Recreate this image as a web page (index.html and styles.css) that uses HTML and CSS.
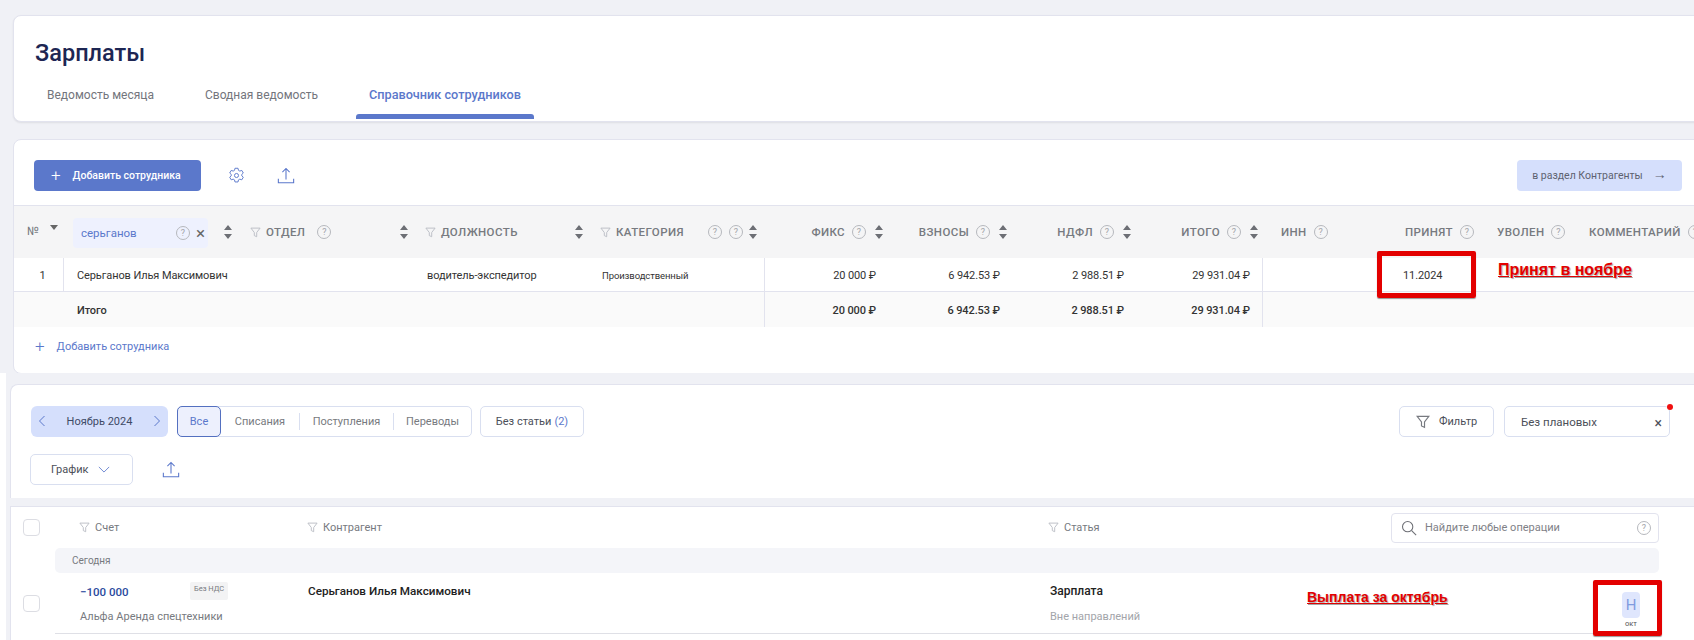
FILE: index.html
```html
<!DOCTYPE html>
<html lang="ru">
<head>
    <meta charset="UTF-8">
    <meta name="viewport" content="width=device-width, initial-scale=1.0">
    <title>Зарплаты</title>
    <link rel="stylesheet" href="styles.css">
</head>
<body>
    <svg class="sprite" width="0" height="0">
        <symbol id="i-filter" viewBox="0 0 12 12"><path d="M1 1.2h10L7.3 6v4.6L4.7 9.4V6z" fill="none" stroke="currentColor" stroke-width="1"/></symbol>
        <symbol id="i-sort" viewBox="0 0 8 16"><path d="M4 1l4 5H0zM4 15l4-5H0z" fill="currentColor"/></symbol>
        <symbol id="i-upload" viewBox="0 0 20 20"><path d="M10 14V2M6 5.6L10 1.6l4 4M1.5 13v4.5h17V13" fill="none" stroke="currentColor" stroke-width="1.2"/></symbol>
        <symbol id="i-gear" viewBox="0 0 20 20"><path d="M8.2 1.5h3.6l.5 2.4 1.6.9 2.3-.8 1.8 3.1-1.8 1.6v1.7l1.8 1.6-1.8 3.1-2.3-.8-1.6.9-.5 2.4H8.2l-.5-2.4-1.6-.9-2.3.8-1.8-3.1 1.8-1.6V8.7L2 7.1l1.8-3.1 2.3.8 1.6-.9z" fill="none" stroke="currentColor" stroke-width="1.1"/><circle cx="10" cy="10" r="2.4" fill="none" stroke="currentColor" stroke-width="1.1"/></symbol>
        <symbol id="i-search" viewBox="0 0 18 18"><circle cx="7.5" cy="7.5" r="5.8" fill="none" stroke="currentColor" stroke-width="1.2"/><path d="M12 12l5 5" stroke="currentColor" stroke-width="1.2"/></symbol>
        <symbol id="i-left" viewBox="0 0 8 12"><path d="M6.5 1L1.5 6l5 5" fill="none" stroke="currentColor"/></symbol>
        <symbol id="i-right" viewBox="0 0 8 12"><path d="M1.5 1l5 5-5 5" fill="none" stroke="currentColor"/></symbol>
    </svg>

    <div class="page">
        <div class="upper">
            <!-- Шапка -->
            <section class="card head-card">
                <h1>Зарплаты</h1>
                <div class="tabs">
                    <div class="tab">Ведомость месяца</div>
                    <div class="tab">Сводная ведомость</div>
                    <div class="tab tab-active">Справочник сотрудников</div>
                </div>
            </section>

            <!-- Справочник -->
            <section class="card staff-card">
                <div class="toolbar">
                    <button class="btn-primary"><span class="plus">+</span>Добавить сотрудника</button>
                    <svg class="icon-gear"><use href="#i-gear"/></svg>
                    <svg class="icon-upload"><use href="#i-upload"/></svg>
                    <button class="btn-light">в раздел Контрагенты<span class="arrow">→</span></button>
                </div>

                <div class="staff-row staff-head">
                    <div class="hc hc-num">№<i class="caret"></i></div>
                    <div class="hc hc-name">
                        <div class="search-chip">серьганов<span class="help"><span>?</span></span><span class="chip-x">×</span></div>
                        <svg class="sort"><use href="#i-sort"/></svg>
                    </div>
                    <div class="hc"><svg class="filter"><use href="#i-filter"/></svg>ОТДЕЛ<span class="help help-wide"><span>?</span></span><svg class="sort"><use href="#i-sort"/></svg></div>
                    <div class="hc"><svg class="filter"><use href="#i-filter"/></svg>ДОЛЖНОСТЬ<svg class="sort"><use href="#i-sort"/></svg></div>
                    <div class="hc"><svg class="filter"><use href="#i-filter"/></svg>КАТЕГОРИЯ<span class="help help-far"><span>?</span></span><span class="help"><span>?</span></span><svg class="sort"><use href="#i-sort"/></svg></div>
                    <div class="hc hc-num-col">ФИКС<span class="help"><span>?</span></span><svg class="sort"><use href="#i-sort"/></svg></div>
                    <div class="hc hc-num-col">ВЗНОСЫ<span class="help"><span>?</span></span><svg class="sort"><use href="#i-sort"/></svg></div>
                    <div class="hc hc-num-col">НДФЛ<span class="help"><span>?</span></span><svg class="sort"><use href="#i-sort"/></svg></div>
                    <div class="hc hc-num-col">ИТОГО<span class="help"><span>?</span></span><svg class="sort"><use href="#i-sort"/></svg></div>
                    <div class="hc hc-inn">ИНН<span class="help"><span>?</span></span></div>
                    <div class="hc hc-hired">ПРИНЯТ<span class="help"><span>?</span></span></div>
                    <div class="hc hc-plain">УВОЛЕН<span class="help"><span>?</span></span></div>
                    <div class="hc hc-plain">КОММЕНТАРИЙ<span class="help"><span>?</span></span></div>
                </div>

                <div class="staff-row staff-line">
                    <div class="c c-num">1</div>
                    <div class="c c-name">Серьганов Илья Максимович</div>
                    <div class="c"></div>
                    <div class="c c-pos">водитель-экспедитор</div>
                    <div class="c c-cat">Производственный</div>
                    <div class="c c-sum c-first">20 000 ₽</div>
                    <div class="c c-sum">6 942.53 ₽</div>
                    <div class="c c-sum">2 988.51 ₽</div>
                    <div class="c c-sum c-last">29 931.04 ₽</div>
                    <div class="c"></div>
                    <div class="c c-date">11.2024</div>
                    <div class="c"></div>
                    <div class="c"></div>
                </div>

                <div class="staff-row staff-total">
                    <div class="c"></div>
                    <div class="c c-name">Итого</div>
                    <div class="c"></div>
                    <div class="c"></div>
                    <div class="c"></div>
                    <div class="c c-sum c-first">20 000 ₽</div>
                    <div class="c c-sum">6 942.53 ₽</div>
                    <div class="c c-sum">2 988.51 ₽</div>
                    <div class="c c-sum c-last">29 931.04 ₽</div>
                    <div class="c"></div>
                    <div class="c"></div>
                    <div class="c"></div>
                    <div class="c"></div>
                </div>

                <div class="add-link"><span class="plus">+</span>Добавить сотрудника</div>
            </section>
        </div>

        <!-- Операции -->
        <div class="lower">
            <div class="lower-inner">
                <section class="ops-top">
                    <div class="ops-bar">
                        <div class="month"><svg class="chev"><use href="#i-left"/></svg><span>Ноябрь 2024</span><svg class="chev"><use href="#i-right"/></svg></div>
                        <div class="segments">
                            <div class="seg seg-active">Все</div>
                            <div class="seg seg-spis">Списания</div>
                            <div class="seg seg-post">Поступления</div>
                            <div class="seg seg-perev">Переводы</div>
                        </div>
                        <div class="outline no-cat">Без статьи <span class="count">(2)</span></div>
                        <div class="outline filter-btn"><svg class="filter-big"><use href="#i-filter"/></svg>Фильтр</div>
                        <div class="outline plan-btn">Без плановых<span class="plan-x">×</span><i class="dot"></i></div>
                    </div>
                    <div class="ops-bar ops-bar2">
                        <div class="outline chart-btn">График
                            <svg class="down" viewBox="0 0 14 8"><path d="M1 1l6 6 6-6" fill="none" stroke="currentColor"/></svg>
                        </div>
                        <svg class="icon-upload"><use href="#i-upload"/></svg>
                    </div>
                </section>

                <section class="ops-list">
                    <div class="ops-head">
                        <div class="check-col"><i class="check"></i></div>
                        <div class="oh oh-acc"><svg class="filter"><use href="#i-filter"/></svg>Счет</div>
                        <div class="oh"><svg class="filter"><use href="#i-filter"/></svg>Контрагент</div>
                        <div class="oh"><svg class="filter"><use href="#i-filter"/></svg>Статья</div>
                        <div class="op-search">
                            <svg class="icon-search"><use href="#i-search"/></svg>
                            <span>Найдите любые операции</span>
                            <span class="help"><span>?</span></span>
                        </div>
                    </div>
                    <div class="day">Сегодня</div>
                    <div class="op-row">
                        <div class="check-col"><i class="check"></i></div>
                        <div class="op-body">
                            <div class="op-acc">
                                <div class="op-top"><span class="amount">−100 000</span><span class="badge">Без НДС</span></div>
                                <div class="op-sub">Альфа Аренда спецтехники</div>
                            </div>
                            <div class="op-name">Серьганов Илья Максимович</div>
                            <div class="op-art">
                                <div class="op-art-title">Зарплата</div>
                                <div class="op-muted">Вне направлений</div>
                            </div>
                            <div class="op-tag">
                                <div class="tag-n">Н</div>
                                <div class="tag-label">окт</div>
                            </div>
                        </div>
                    </div>
                </section>
            </div>
        </div>

        <!-- Пометки поверх скриншота -->
        <div class="mark mark-hired"></div>
        <div class="mark mark-oct"></div>
        <div class="note note-hired">Принят в ноябре</div>
        <div class="note note-oct">Выплата за октябрь</div>
    </div>
</body>
</html>
```

FILE: styles.css
```css
* {
    margin: 0;
    padding: 0;
    box-sizing: border-box;
}

body {
    font-family: 'Roboto', 'Noto Sans', sans-serif;
    background-color: #f0f1f6;
    color: #333;
    font-size: 12px;
    overflow: hidden;
}

.sprite {
    position: absolute;
}

.page {
    position: relative;
    width: 1694px;
    height: 640px;
    overflow: hidden;
}

.upper {
    padding: 15px 0 0 13px;
    height: 373px;
}

.card {
    background: #fff;
    border: 1px solid #e2e3ee;
    border-radius: 8px;
    width: 1700px;
    overflow: hidden;
}

/* Шапка */
.head-card {
    height: 107px;
    box-shadow: 0 1px 2px rgba(0, 0, 0, 0.08);
    padding: 23px 0 0 21px;
}

.head-card h1 {
    font-size: 23.5px;
    line-height: 28px;
    font-weight: 500;
    color: #1d2653;
}

.tabs {
    display: flex;
    gap: 25px;
    margin: 20px 0 0 -1px;
}

.tab {
    padding: 0 13px;
    line-height: 16px;
    color: #73757c;
    font-size: 12px;
}

.tab-active {
    color: #5b78cb;
    font-weight: 500;
    font-size: 12.7px;
}

.tab-active::after {
    content: "";
    display: block;
    height: 5px;
    margin: 11px -13px 0;
    background: #5b78cb;
    border-radius: 3px 3px 0 0;
}

/* Справочник */
.staff-card {
    height: 235px;
    margin-top: 17px;
}

.toolbar {
    display: flex;
    align-items: center;
    height: 65px;
    padding: 6px 30px 0 20px;
}

.btn-primary {
    display: flex;
    align-items: center;
    height: 31px;
    width: 167px;
    padding-left: 17px;
    background: #5b78cb;
    border: none;
    border-radius: 4px;
    color: #fff;
    font: 500 10.5px 'Roboto', sans-serif;
}

.plus {
    font-size: 17px;
    font-weight: 300;
    margin-right: 12px;
    line-height: 1;
}

.icon-gear {
    width: 17px;
    height: 17px;
    margin-left: 27px;
    color: #5b78cb;
}

.icon-upload {
    width: 18px;
    height: 20px;
    margin-left: 32px;
    color: #5b78cb;
}

.btn-light {
    margin-left: auto;
    display: flex;
    align-items: center;
    justify-content: center;
    height: 31px;
    width: 165px;
    background: #d5dffc;
    border: none;
    border-radius: 4px;
    color: #5d6270;
    font: 10.5px 'Roboto', sans-serif;
}

.arrow {
    margin: -3px 0 0 10px;
    font-size: 14px;
    line-height: 1;
}

.staff-row {
    display: grid;
    grid-template-columns: 50px 176px 175px 175px 174px 124px 124px 124px 127px 112px 112px 92px 115px;
}

.staff-head {
    height: 53px;
    background: #f5f5f6;
    border-top: 1px solid #e2e3ee;
}

.hc {
    display: flex;
    align-items: center;
    padding: 0 7px 0 10px;
    font-size: 11.5px;
    font-weight: 500;
    letter-spacing: 0.4px;
    color: #777a80;
    white-space: nowrap;
}

.hc-num {
    padding-left: 13px;
    font-weight: 400;
    letter-spacing: 0;
    align-items: flex-start;
    padding-top: 18px;
}

.caret {
    width: 0;
    height: 0;
    margin: 1px 0 0 11px;
    border-left: 4px solid transparent;
    border-right: 4px solid transparent;
    border-top: 5px solid #666;
}

.hc-name {
    padding-left: 9px;
    padding-right: 8px;
}

.filter {
    width: 11px;
    height: 11px;
    margin-right: 5px;
    color: #b9bcc4;
    flex-shrink: 0;
}

.sort {
    width: 8px;
    height: 16px;
    margin-left: auto;
    color: #6d6f75;
    flex-shrink: 0;
}

.help {
    display: inline-flex;
    align-items: center;
    justify-content: center;
    width: 14px;
    height: 14px;
    margin-left: 7px;
    border: 1px solid #b6b8bd;
    border-radius: 50%;
    color: #a2a4aa;
    font-size: 9px;
    font-weight: 400;
    letter-spacing: 0;
    flex-shrink: 0;
}

.help-wide {
    margin-left: 12px;
}

.help-far {
    margin-left: 24px;
}

.search-chip {
    display: flex;
    align-items: center;
    width: 135px;
    height: 30px;
    padding-left: 8px;
    background: #eef1fe;
    border-radius: 4px;
    color: #5b78cb;
    font-weight: 400;
    letter-spacing: 0;
    font-size: 11.5px;
    margin-top: 2px;
}

.search-chip .help {
    margin-left: auto;
}

.chip-x {
    margin: 0 3px 0 6px;
    font-size: 17px;
    color: #666;
}

.hc-num-col {
    justify-content: flex-end;
    padding-right: 5px;
}

.hc-num-col .sort {
    margin-left: 9px;
}

.hc-inn {
    padding-left: 18px;
}

.hc-hired {
    justify-content: flex-end;
    padding-right: 13px;
}

.staff-line {
    height: 34px;
    border-bottom: 1px solid #e2e3ee;
}

.staff-total {
    height: 35px;
    background: #fafafa;
    font-weight: 500;
}

.c {
    display: flex;
    align-items: center;
    padding-top: 1px;
    font-size: 11px;
    letter-spacing: -0.1px;
    color: #333;
    white-space: nowrap;
}

.c-num {
    justify-content: center;
    padding-left: 8px;
    border-right: 1px solid #e2e3ee;
}

.c-name {
    padding-left: 13px;
}

.c-pos {
    padding-left: 12px;
}

.c-cat {
    padding-left: 12px;
    font-size: 9.5px;
}

.c-sum {
    justify-content: flex-end;
    padding-right: 12px;
}

.c-first {
    border-left: 1px solid #e2e3ee;
}

.c-last {
    border-right: 1px solid #e2e3ee;
}

.c-date {
    padding-left: 28px;
}

.add-link {
    display: flex;
    align-items: center;
    height: 38px;
    padding-left: 21px;
    color: #5b78cb;
    font-size: 11px;
}

/* Операции */
.lower {
    height: 267px;
    background: #fff;
    padding-left: 6px;
}

.lower-inner {
    height: 100%;
    background: #f0f1f6;
    padding: 11px 0 0 4px;
}

.ops-top {
    height: 114px;
    background: #fff;
    border-top: 1px solid #e2e3ee;
    border-left: 1px solid #e2e3ee;
    border-radius: 8px 0 0 0;
    padding: 21px 24px 0 20px;
}

.ops-bar {
    display: flex;
    align-items: center;
    height: 31px;
}

.ops-bar2 {
    margin-top: 17px;
}

.month {
    display: flex;
    align-items: center;
    justify-content: space-between;
    width: 137px;
    height: 31px;
    padding: 0 7px;
    background: #d5dffc;
    border-radius: 6px;
    font-size: 11px;
    color: #3e4a66;
}

.chev {
    width: 8px;
    height: 12px;
    color: #5b78cb;
    margin-top: -2px;
}

.segments {
    display: flex;
    height: 31px;
    margin-left: 9px;
    border: 1px solid #d9dff0;
    border-radius: 5px;
    font-size: 11px;
    color: #777a80;
}

.seg {
    display: flex;
    align-items: center;
    justify-content: center;
}

.seg-active {
    width: 44px;
    margin: -1px 0 -1px -1px;
    background: #edf0fd;
    border: 1px solid #5470c0;
    border-radius: 5px;
    color: #5b78cb;
}

.seg-spis {
    width: 78px;
}

.seg-post {
    width: 95px;
    border-left: 1px solid #d9dff0;
    border-right: 1px solid #d9dff0;
    margin: 6px 0;
}

.seg-perev {
    width: 77px;
}

.outline {
    display: flex;
    align-items: center;
    height: 31px;
    background: #fff;
    border: 1px solid #d9dff0;
    border-radius: 5px;
    font-size: 11px;
    color: #4b4f59;
}

.no-cat {
    width: 104px;
    margin-left: 8px;
    justify-content: center;
}

.count {
    color: #5b78cb;
    margin-left: 3px;
}

.filter-btn {
    width: 95px;
    margin-left: auto;
    padding-left: 16px;
}

.filter-big {
    width: 14px;
    height: 14px;
    margin-right: 9px;
    color: #777a80;
}

.plan-btn {
    position: relative;
    width: 166px;
    margin-left: 10px;
    padding-left: 16px;
    font-size: 11.5px;
}

.plan-x {
    margin-left: auto;
    margin-right: 7px;
    margin-top: 2px;
    font-size: 14px;
}

.dot {
    position: absolute;
    top: -3px;
    right: -4px;
    width: 6px;
    height: 6px;
    border-radius: 50%;
    background: #f01010;
}

.chart-btn {
    width: 103px;
    margin-left: -1px;
    padding-left: 20px;
}

.down {
    width: 12px;
    height: 7px;
    margin-left: 10px;
    color: #5b78cb;
}

.ops-bar2 .icon-upload {
    margin-left: 29px;
}

.ops-list {
    margin-top: 8px;
    height: 134px;
    background: #fff;
    border-top: 1px solid #e2e3ee;
    border-left: 1px solid #e2e3ee;
}

.ops-head {
    display: grid;
    grid-template-columns: 44px 252px 741px 343px 268px;
    align-items: center;
    height: 41px;
}

.check-col {
    display: flex;
    align-items: center;
    flex-shrink: 0;
    width: 44px;
    padding-left: 12px;
}

.check {
    width: 17px;
    height: 17px;
    border: 1px solid #dcdde3;
    border-radius: 4px;
    background: #fff;
}

.oh {
    display: flex;
    align-items: center;
    font-size: 11px;
    color: #777a80;
}

.oh-acc {
    padding-left: 24px;
}

.op-search {
    display: flex;
    align-items: center;
    height: 30px;
    padding: 0 7px 0 9px;
    border: 1px solid #e2e3ee;
    border-radius: 4px;
    color: #7f8187;
    font-size: 11px;
}

.icon-search {
    width: 16px;
    height: 16px;
    margin-right: 8px;
    color: #6d6f75;
}

.op-search .help {
    margin-left: auto;
}

.day {
    display: flex;
    align-items: center;
    width: 1604px;
    height: 25px;
    margin-left: 44px;
    padding-left: 17px;
    background: #f4f5f9;
    border-radius: 5px;
    font-size: 10px;
    color: #777a80;
}

.op-row {
    display: flex;
}

.op-body {
    display: grid;
    grid-template-columns: 252px 741px 1fr 90px;
    width: 1604px;
    height: 61px;
    border-bottom: 1px solid #dfe0e6;
}

.op-acc {
    padding: 10px 0 0 25px;
}

.op-top {
    display: flex;
    align-items: flex-start;
    height: 18px;
}

.amount {
    width: 110px;
    color: #2b4a9e;
    font-size: 11.5px;
    font-weight: 500;
    line-height: 18px;
}

.badge {
    margin-top: -1px;
    padding: 2px 4px 0;
    width: 38px;
    height: 18px;
    background: #f3f3f4;
    border-radius: 2px;
    color: #777a80;
    font-size: 7.5px;
    text-align: center;
    white-space: nowrap;
}

.op-sub {
    margin-top: 9px;
    color: #777a80;
    font-size: 11px;
}

.op-name {
    padding: 11px 0 0 1px;
    font-size: 11.7px;
    font-weight: 500;
    color: #222;
}

.op-art {
    padding: 11px 0 0 2px;
}

.op-art-title {
    font-size: 12px;
    font-weight: 500;
    color: #222;
}

.op-muted {
    margin-top: 12px;
    color: #a3a5aa;
    font-size: 11px;
}

.op-tag {
    display: flex;
    flex-direction: column;
    align-items: center;
    padding: 19px 19px 0 0;
    justify-self: end;
}

.tag-n {
    display: flex;
    align-items: center;
    justify-content: center;
    width: 18px;
    height: 26px;
    background: #dfe6fd;
    border-radius: 4px;
    color: #7f9bdf;
    font-size: 15px;
}

.tag-label {
    margin-top: 1px;
    font-size: 7.5px;
    color: #555;
}

/* Пометки */
.mark {
    position: absolute;
    border: 5px solid #e30000;
    border-radius: 2px;
    box-shadow: 0 1px 1px rgba(0, 0, 0, 0.4);
}

.mark-hired {
    left: 1377px;
    top: 251px;
    width: 99px;
    height: 47px;
}

.mark-oct {
    left: 1593px;
    top: 580px;
    width: 69px;
    height: 56px;
}

.note {
    position: absolute;
    font-family: 'Liberation Sans', sans-serif;
    font-weight: bold;
    line-height: 18px;
    color: #e30000;
    text-decoration: underline;
    text-shadow: 1px 1px 1px rgba(0, 0, 0, 0.35);
    white-space: nowrap;
}

.note-hired {
    left: 1498px;
    top: 261px;
    font-size: 16px;
}

.note-oct {
    left: 1307px;
    top: 588px;
    font-size: 14px;
}
```
